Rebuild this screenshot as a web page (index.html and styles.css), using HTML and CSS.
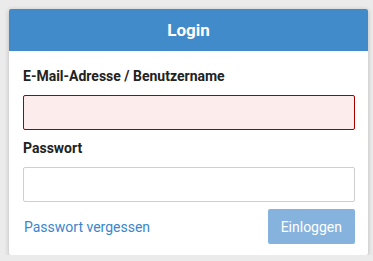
FILE: index.html
```html
<!DOCTYPE html>
<html lang="de">
<head>
  <meta charset="UTF-8">
  <meta name="viewport" content="width=device-width, initial-scale=1.0">
  <title>Login</title>
  <link rel="stylesheet" href="styles.css">
</head>
<body>
  <div class="login-card">
    <div class="login-header">Login</div>
    <form class="login-body">
      <div class="form-group">
        <label for="user">E-Mail-Adresse / Benutzername</label>
        <input type="text" id="user" class="form-input has-error">
      </div>
      <div class="form-group">
        <label for="pass">Passwort</label>
        <input type="password" id="pass" class="form-input">
      </div>
      <div class="form-actions">
        <a href="#" class="forgot-link">Passwort vergessen</a>
        <button type="submit" class="login-button" disabled>Einloggen</button>
      </div>
    </form>
  </div>
</body>
</html>
```

FILE: styles.css
```css
body {
  margin: 0;
  padding: 9px 0 0 9px;
  background-color: #ebebeb;
  font-family: Roboto, "Liberation Sans", Arial, sans-serif;
  font-size: 14px;
  line-height: 20px;
  color: #222;
}

.login-card {
  width: 359px;
  background-color: #fff;
  border-radius: 2px;
  box-shadow: 0 1px 5px rgba(0, 0, 0, 0.22);
  box-sizing: border-box;
}

.login-header {
  height: 42px;
  line-height: 42px;
  background-color: #418bcb;
  color: #fff;
  font-size: 17px;
  font-weight: bold;
  text-align: center;
  border-radius: 2px 2px 0 0;
}

.login-body {
  padding: 15px 13px 11px 14px;
  margin: 0;
}

.form-group {
  margin-bottom: 8px;
}

.form-group label {
  display: block;
  font-weight: bold;
  margin-bottom: 9px;
}

.form-input {
  display: block;
  width: 100%;
  height: 35px;
  box-sizing: border-box;
  border: 1px solid #cfcfcf;
  border-radius: 2px;
  background-color: #fff;
  padding: 6px 10px;
  font: inherit;
  margin: 0;
}

.form-input.has-error {
  border-color: #a50000;
  background-color: #fdecec;
}

.form-actions {
  display: flex;
  align-items: center;
  justify-content: space-between;
  margin-top: -1px;
}

.forgot-link {
  color: #3a86cc;
  text-decoration: none;
  padding-left: 1px;
}

.login-button {
  height: 35px;
  padding: 0 13px;
  border: none;
  border-radius: 2px;
  background-color: #86b3de;
  color: #fff;
  font: inherit;
  font-size: 14px;
}
```
